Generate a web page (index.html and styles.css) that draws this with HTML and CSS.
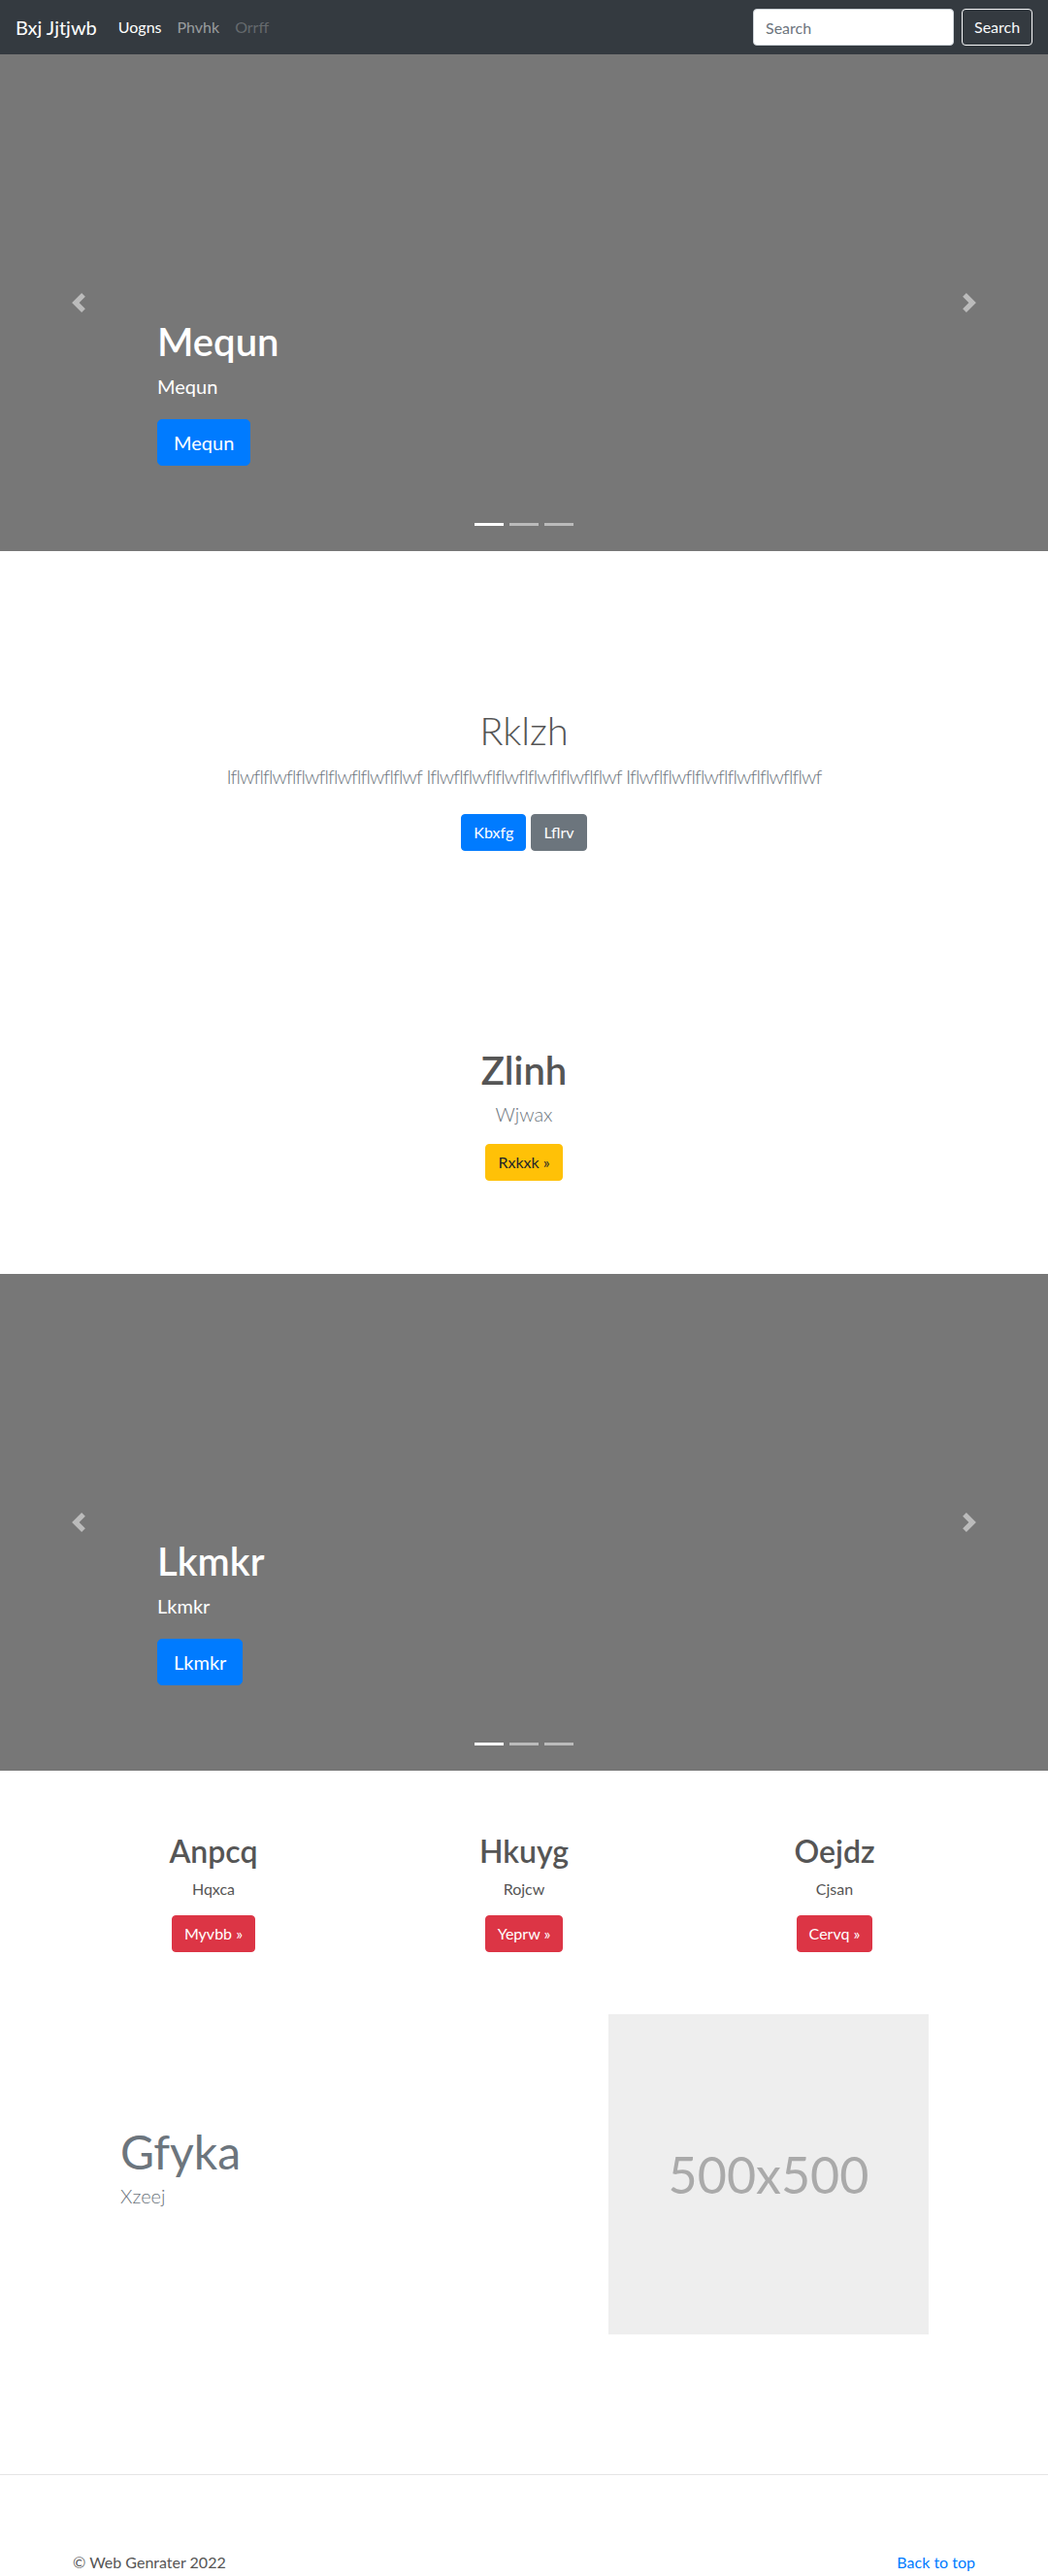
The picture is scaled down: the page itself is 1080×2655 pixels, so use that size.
FILE: index.html
```html
<!DOCTYPE html>
<html lang="en">
<head>
<meta charset="utf-8">
<title>Bxj Jjtjwb</title>
<link rel="stylesheet" href="styles.css">
</head>
<body>
<header class="navbar">
  <a class="brand" href="#">Bxj Jjtjwb</a>
  <nav class="nav">
    <a class="nav-link active" href="#">Uogns</a>
    <a class="nav-link" href="#">Phvhk</a>
    <a class="nav-link disabled" href="#">Orrff</a>
  </nav>
  <form class="search">
    <input class="search-input" type="text" placeholder="Search">
    <button class="search-btn" type="button">Search</button>
  </form>
</header>

<section class="carousel">
  <a class="control prev" href="#"><svg class="control-icon" viewBox="0 0 8 8"><path d="M5.25 0l-4 4 4 4 1.5-1.5-2.5-2.5 2.5-2.5-1.5-1.5z"/></svg></a>
  <div class="caption">
    <h1 class="caption-title">Mequn</h1>
    <p class="caption-text">Mequn</p>
    <div class="caption-action"><a class="btn btn-lg btn-primary" href="#">Mequn</a></div>
  </div>
  <a class="control next" href="#"><svg class="control-icon" viewBox="0 0 8 8"><path d="M2.75 0l-1.5 1.5 2.5 2.5-2.5 2.5 1.5 1.5 4-4-4-4z"/></svg></a>
  <ol class="indicators"><li class="active"></li><li></li><li></li></ol>
</section>

<section class="intro">
  <h1 class="intro-title">Rklzh</h1>
  <p class="intro-lead">Iflwflflwflflwflflwflflwflflwf Iflwflflwflflwflflwflflwflflwf Iflwflflwflflwflflwflflwflflwf</p>
  <div class="intro-actions">
    <a class="btn btn-primary" href="#">Kbxfg</a>
    <a class="btn btn-secondary" href="#">Lflrv</a>
  </div>
</section>

<section class="cta">
  <h2 class="cta-title">Zlinh</h2>
  <p class="cta-text">Wjwax</p>
  <a class="btn btn-warning" href="#">Rxkxk »</a>
</section>

<section class="carousel">
  <a class="control prev" href="#"><svg class="control-icon" viewBox="0 0 8 8"><path d="M5.25 0l-4 4 4 4 1.5-1.5-2.5-2.5 2.5-2.5-1.5-1.5z"/></svg></a>
  <div class="caption">
    <h1 class="caption-title">Lkmkr</h1>
    <p class="caption-text">Lkmkr</p>
    <div class="caption-action"><a class="btn btn-lg btn-primary" href="#">Lkmkr</a></div>
  </div>
  <a class="control next" href="#"><svg class="control-icon" viewBox="0 0 8 8"><path d="M2.75 0l-1.5 1.5 2.5 2.5-2.5 2.5 1.5 1.5 4-4-4-4z"/></svg></a>
  <ol class="indicators"><li class="active"></li><li></li><li></li></ol>
</section>

<section class="columns">
  <div class="col">
    <h2 class="col-title">Anpcq</h2>
    <p class="col-text">Hqxca</p>
    <a class="btn btn-danger" href="#">Myvbb »</a>
  </div>
  <div class="col">
    <h2 class="col-title">Hkuyg</h2>
    <p class="col-text">Rojcw</p>
    <a class="btn btn-danger" href="#">Yeprw »</a>
  </div>
  <div class="col">
    <h2 class="col-title">Oejdz</h2>
    <p class="col-text">Cjsan</p>
    <a class="btn btn-danger" href="#">Cervq »</a>
  </div>
</section>

<section class="feature">
  <div class="feature-text">
    <h2 class="feature-title">Gfyka</h2>
    <p class="feature-lead">Xzeej</p>
  </div>
  <div class="placeholder">500x500</div>
</section>

<hr class="divider">

<footer class="footer">
  <p class="footer-copy">© Web Genrater 2022</p>
  <a class="footer-top" href="#">Back to top</a>
</footer>
</body>
</html>
```

FILE: styles.css
```css
* { box-sizing: border-box; }

body {
  margin: 0;
  font-family: Lato, "Open Sans", sans-serif;
  font-size: 16px;
  line-height: 1.5;
  color: #212529;
  background: #fff;
}

a { text-decoration: none; }

/* navbar */
.navbar {
  display: flex;
  align-items: center;
  height: 56px;
  padding: 0 16px;
  background: #343a40;
}
.brand {
  font-size: 20px;
  line-height: 30px;
  color: #fff;
  margin-right: 14px;
}
.nav { display: flex; }
.nav-link {
  padding: 0 8px;
  color: rgba(255, 255, 255, 0.5);
  line-height: 24px;
}
.nav-link.active { color: #fff; }
.nav-link.disabled { color: rgba(255, 255, 255, 0.25); }
.search {
  margin-left: auto;
  display: flex;
  align-items: center;
}
.search-input {
  width: 207px;
  height: 38px;
  padding: 6px 12px;
  border: 1px solid #ced4da;
  border-radius: 4px;
  font: inherit;
  color: #495057;
  background: #fff;
}
.search-input::placeholder { color: #6c757d; }
.search-btn {
  margin-left: 8px;
  height: 38px;
  width: 73px;
  padding: 6px 12px;
  border: 1px solid #f8f9fa;
  border-radius: 4px;
  background: transparent;
  color: #f8f9fa;
  font: inherit;
}

/* carousel */
.carousel {
  position: relative;
  height: 512px;
  background: #777;
}
.control {
  position: absolute;
  top: 0;
  bottom: 0;
  width: 15%;
  display: flex;
  align-items: center;
  justify-content: center;
  opacity: 0.5;
}
.control.prev { left: 0; }
.control.next { right: 0; }
.control-icon { width: 20px; height: 20px; fill: #fff; }
.caption {
  position: absolute;
  left: 15%;
  right: 15%;
  bottom: 48px;
  padding: 20px 0;
  color: #fff;
}
.caption-title {
  margin: 0 0 7px;
  font-size: 40px;
  line-height: 48px;
  font-weight: 600;
}
.caption-text {
  margin: 0 0 16px;
  font-size: 20px;
  line-height: 30px;
}
.caption-action {
  padding: 3px 0 4px;
  margin-bottom: 16px;
  display: flex;
}
.indicators {
  position: absolute;
  left: 0;
  right: 0;
  bottom: 0;
  margin: 0 0 16px;
  padding: 0;
  list-style: none;
  display: flex;
  justify-content: center;
}
.indicators li {
  width: 30px;
  height: 23px;
  margin: 0 3px;
  border-top: 10px solid transparent;
  border-bottom: 10px solid transparent;
  background: #fff;
  background-clip: padding-box;
  opacity: 0.5;
}
.indicators li.active { opacity: 1; }

/* buttons */
.btn {
  display: inline-block;
  padding: 6px 12px;
  font-size: 16px;
  line-height: 24px;
  border: 1px solid transparent;
  border-radius: 4px;
  color: #fff;
}
.btn-lg {
  padding: 8px 16px;
  font-size: 20px;
  line-height: 30px;
  border-radius: 5px;
}
.btn-primary { background: #007bff; border-color: #007bff; }
.btn-secondary { background: #6c757d; border-color: #6c757d; }
.btn-warning { background: #ffc107; border-color: #ffc107; color: #212529; }
.btn-danger { background: #dc3545; border-color: #dc3545; }

/* intro */
.intro {
  text-align: center;
  padding-top: 161px;
}
.intro-title {
  margin: 0 0 8px;
  font-size: 40px;
  line-height: 48px;
  font-weight: 300;
  color: #555;
}
.intro-lead {
  margin: 0 0 24px;
  font-size: 20px;
  line-height: 30px;
  font-weight: 300;
  letter-spacing: -0.85px;
  color: #6c757d;
}
.intro-actions {
  display: flex;
  justify-content: center;
  gap: 5px;
}

/* cta */
.cta {
  text-align: center;
  padding: 202px 0 96px;
}
.cta-title {
  margin: 0 0 6px;
  font-size: 40px;
  line-height: 48px;
  font-weight: 600;
  color: #555;
}
.cta-text {
  margin: 0 0 16px;
  font-size: 20px;
  line-height: 30px;
  font-weight: 300;
  color: #6c757d;
}

/* columns */
.columns {
  width: 960px;
  margin: 64px auto 0;
  display: grid;
  grid-template-columns: repeat(3, 1fr);
}
.col {
  text-align: center;
  padding: 0 15px;
}
.col-title {
  margin: 0 0 8px;
  font-size: 32px;
  line-height: 38px;
  font-weight: 600;
  color: #555;
}
.col-text {
  margin: 0 0 15px;
  color: #555;
}

/* feature */
.feature {
  width: 960px;
  margin: 64px auto 0;
  padding: 0 63px 0 64px;
  display: grid;
  grid-template-columns: 1fr 330px;
  align-items: center;
}
.feature-title {
  margin: 0 0 2px;
  font-size: 48px;
  line-height: 57px;
  font-weight: 400;
  color: #6c757d;
}
.feature-lead {
  margin: 0 0 16px;
  font-size: 20px;
  line-height: 30px;
  font-weight: 300;
  color: #6c757d;
}
.placeholder {
  width: 330px;
  height: 330px;
  background: #eee;
  color: #aaa;
  font-size: 52px;
  display: flex;
  align-items: center;
  justify-content: center;
}

/* footer */
.divider {
  margin: 144px 0 0;
  border: 0;
  border-top: 1px solid #e5e5e5;
}
.footer {
  width: 960px;
  margin: 0 auto;
  padding: 78px 15px 48px;
  display: flex;
  justify-content: space-between;
}
.footer-copy { margin: 0; color: #555; }
.footer-top { color: #007bff; }
```
